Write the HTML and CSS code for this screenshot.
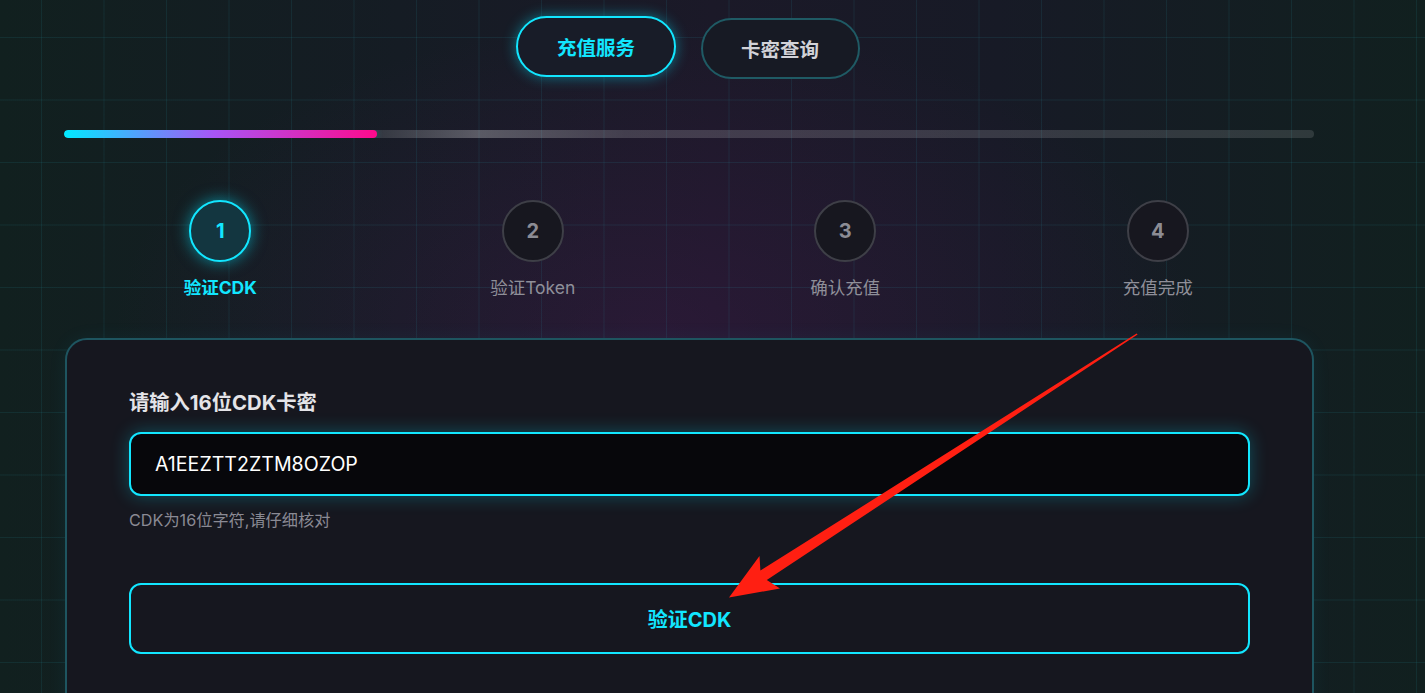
FILE: index.html
```html
<!DOCTYPE html>
<html lang="zh-CN">
<head>
<meta charset="utf-8">
<title>充值服务</title>
<link rel="stylesheet" href="styles.css">
</head>
<body>
<div class="page">
  <nav class="tabs">
    <button class="tab tab-active">充值服务</button>
    <button class="tab">卡密查询</button>
  </nav>

  <div class="progress">
    <div class="progress-fill" style="width:25%"></div>
  </div>

  <ol class="steps">
    <li class="step step-active"><span class="step-num">1</span><span class="step-label">验证CDK</span></li>
    <li class="step"><span class="step-num">2</span><span class="step-label">验证Token</span></li>
    <li class="step"><span class="step-num">3</span><span class="step-label">确认充值</span></li>
    <li class="step"><span class="step-num">4</span><span class="step-label">充值完成</span></li>
  </ol>

  <section class="card">
    <label class="field-label" for="cdk">请输入16位CDK卡密</label>
    <div class="input-box"><span id="cdk" class="input-value">A1EEZTT2ZTM8OZOP</span></div>
    <p class="hint">CDK为16位字符,请仔细核对</p>
    <button class="verify-btn">验证CDK</button>
  </section>
</div>

<svg class="annotation" width="1425" height="693" viewBox="0 0 1425 693" xmlns="http://www.w3.org/2000/svg">
  <polygon fill="#ff1f12" points="1137.6,334.6 766.8,580 780,588.5 729,597.5 759.5,556 760.4,570.6 1136.6,333.6"/>
</svg>
</body>
</html>
```

FILE: styles.css
```css
* { box-sizing: border-box; }

html, body {
  margin: 0;
  height: 693px;
  overflow: hidden;
}

body {
  font-family: Inter, "Noto Sans CJK SC", sans-serif;
  color: #e6e6ea;
  background-color: #141b22;
  background-image:
    linear-gradient(rgba(40, 180, 200, 0.10) 1px, transparent 1px),
    linear-gradient(90deg, rgba(40, 180, 200, 0.10) 1px, transparent 1px),
    radial-gradient(ellipse 38% 45% at 46% 48%, rgba(70, 25, 80, 0.35), transparent 100%),
    linear-gradient(90deg, #11201f 0%, #151c24 28%, #1b1928 50%, #171a26 70%, #11201f 100%);
  background-size: 62.5px 62.5px, 62.5px 62.5px, 100% 100%, 100% 100%;
  background-position: 41px 37px, 41px 37px, 0 0, 0 0;
  position: relative;
}

.page {
  width: 1250px;
  margin-left: 64px;
  padding-top: 18px;
}

/* tabs */
.tabs {
  display: flex;
  justify-content: center;
  gap: 25px;
  height: 61px;
  padding-right: 2px;
}

.tab {
  height: 61px;
  padding: 0 38.5px;
  border-radius: 31px;
  border: 2px solid #1f5a64;
  background: #171a24;
  color: #d2d2d8;
  font-family: "Noto Sans CJK SC", sans-serif;
  font-size: 19.5px;
  font-weight: 700;
}

.tab-active {
  transform: translateY(-2px);
  border-color: #12e6ff;
  color: #12e6ff;
  background: #181c28;
  box-shadow: 0 0 14px rgba(0, 229, 255, 0.45);
}

/* progress */
.progress {
  margin-top: 51px;
  height: 8px;
  border-radius: 4px;
  background: linear-gradient(90deg, rgba(255,255,255,0.10) 0%, rgba(255,255,255,0.10) 24%, rgba(255,255,255,0.28) 33%, rgba(255,255,255,0.16) 45%, rgba(255,255,255,0.12) 100%);
  overflow: hidden;
}

.progress-fill {
  height: 100%;
  border-radius: 4px;
  background: linear-gradient(90deg, #00eaff 0%, #a855f7 48%, #ff0a8c 100%);
  box-shadow: 0 0 6px rgba(0, 229, 255, 0.3);
}

/* steps */
.steps {
  list-style: none;
  margin: 62px 0 0;
  padding: 0;
  display: grid;
  grid-template-columns: repeat(4, 1fr);
}

.step {
  display: flex;
  flex-direction: column;
  align-items: center;
  gap: 14px;
}

.step-num {
  width: 62px;
  height: 62px;
  border-radius: 50%;
  border: 2px solid #3e3f47;
  background: #17171f;
  color: #8c8c94;
  font-size: 20px;
  font-weight: 700;
  display: flex;
  align-items: center;
  justify-content: center;
}

.step-label {
  font-size: 17.5px;
  line-height: 24px;
  color: #8f8f99;
}

.step-active .step-num {
  border-color: #12e6ff;
  background: #133640;
  color: #12e6ff;
  box-shadow: 0 0 16px rgba(0, 229, 255, 0.55);
}

.step-active .step-label {
  color: #12e6ff;
  font-weight: 700;
}

/* card */
.card {
  margin-top: 38px;
  margin-left: 1px;
  width: 1249px;
  height: 420px;
  border: 2px solid #1e5560;
  border-radius: 22px;
  background: #16171f;
  padding: 48px 62px 0;
  box-shadow: 0 0 20px rgba(0, 200, 230, 0.06);
}

.field-label {
  display: block;
  font-size: 20.3px;
  line-height: 30px;
  font-weight: 700;
  color: #e4e4e8;
}

.input-box {
  margin-top: 14px;
  height: 64px;
  border: 2px solid #12e6ff;
  border-radius: 12px;
  background: #07070b;
  padding: 0 24px;
  display: flex;
  align-items: center;
  box-shadow: 0 0 18px rgba(0, 229, 255, 0.28);
}

.input-value {
  font-size: 19.6px;
  color: #ffffff;
}

.hint {
  margin: 12px 0 0;
  font-size: 16.2px;
  line-height: 24px;
  color: #8a8a94;
}

.verify-btn {
  display: block;
  width: 100%;
  margin-top: 51px;
  height: 71px;
  border: 2px solid #12e6ff;
  border-radius: 12px;
  background: transparent;
  color: #12e6ff;
  font-family: Inter, "Noto Sans CJK SC", sans-serif;
  font-size: 20px;
  font-weight: 700;
}

/* annotation overlay */
.annotation {
  position: absolute;
  left: 0;
  top: 0;
  pointer-events: none;
}
```
